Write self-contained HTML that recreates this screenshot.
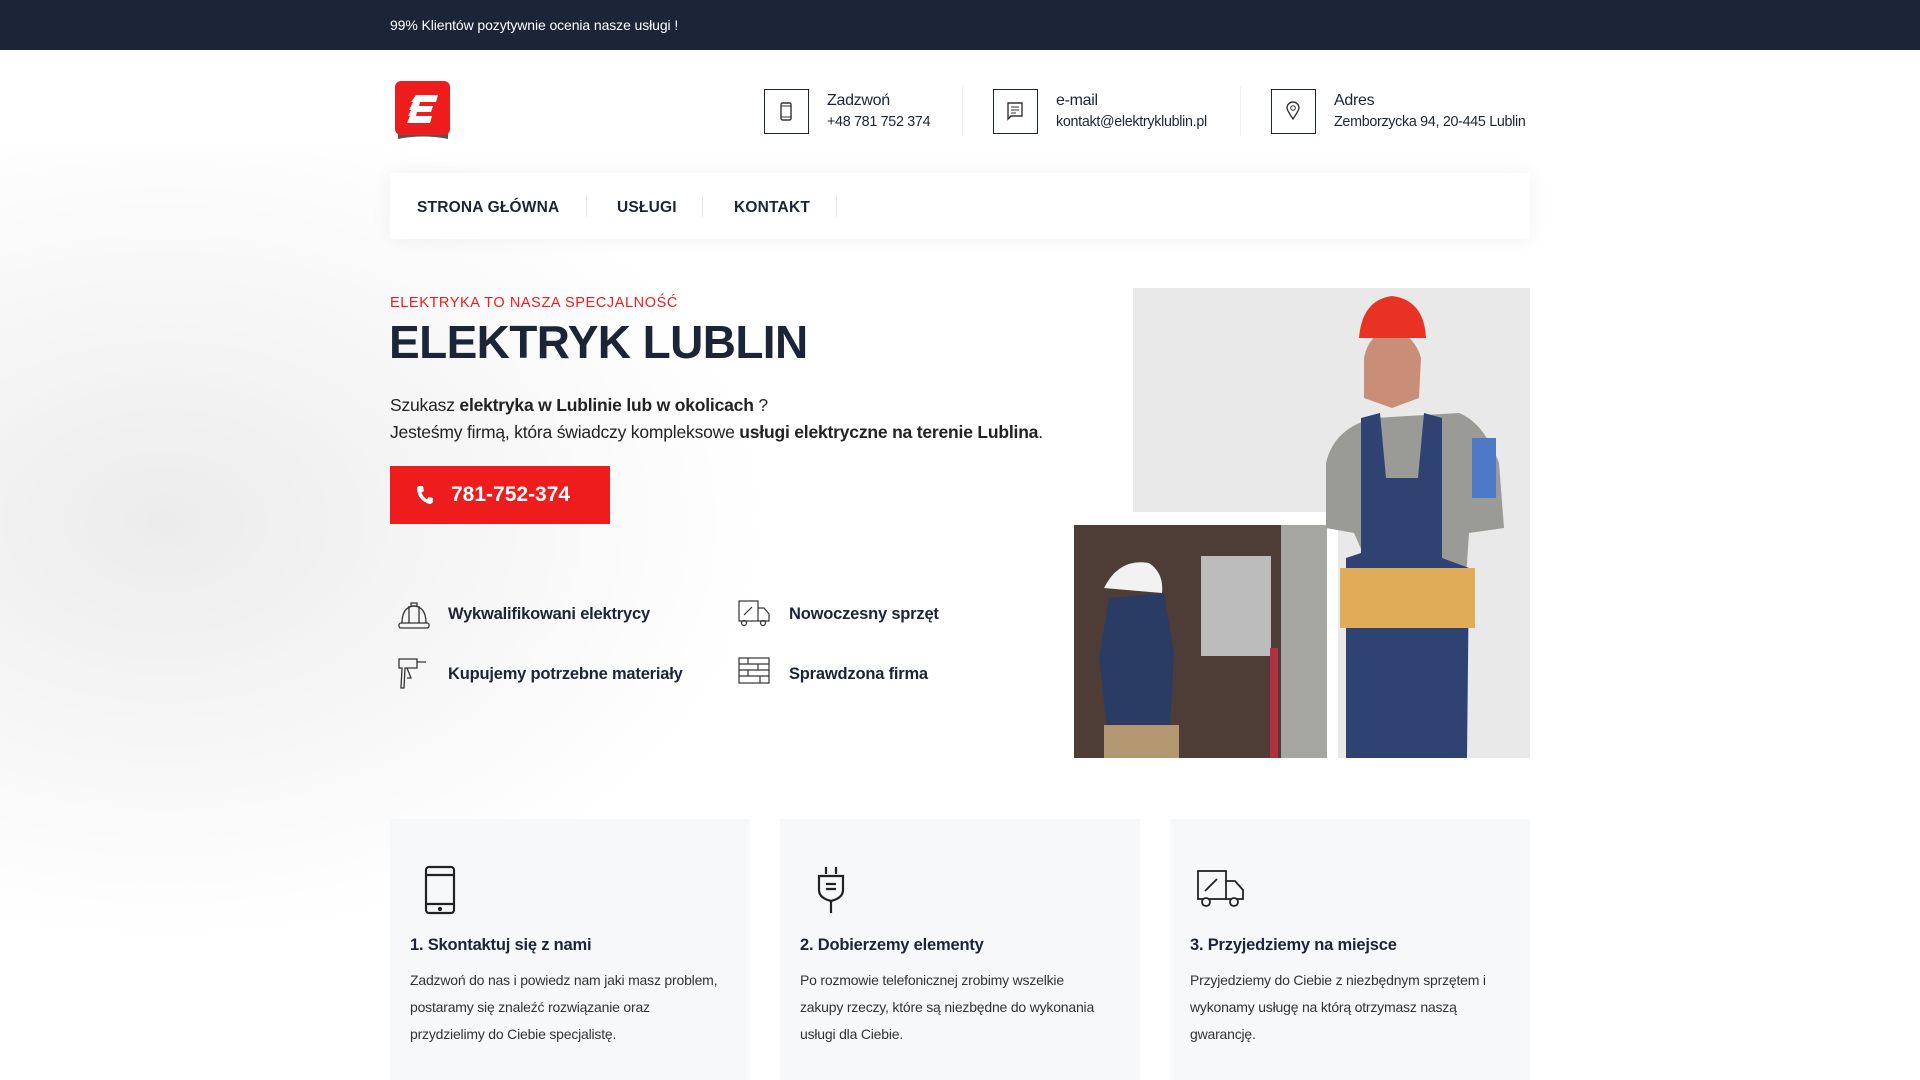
<!DOCTYPE html>
<html><head><meta charset="utf-8"><style>
*{margin:0;padding:0;box-sizing:border-box}
body{width:1920px;height:1080px;overflow:hidden;font-family:"Liberation Sans",sans-serif;color:#1b2537;background:#fff;position:relative}
.top{position:absolute;left:0;top:0;width:1920px;height:50px;background:#1b2537;color:#fff;font-size:14px;line-height:50px;padding-left:390px;letter-spacing:-.1px}
.bg{position:absolute;left:0;top:150px;width:1100px;height:930px;background:radial-gradient(ellipse 55% 45% at 15% 40%,#ececec 0%,#f5f5f5 45%,#fff 100%)}
.abs{position:absolute}
.cbox{position:absolute;width:45px;height:45px;border:1.5px solid #1b2537;top:89px}
.ct{position:absolute;top:92px;font-size:16px;color:#1b2537;letter-spacing:-.3px}
.ct small{display:block;font-size:14.3px;margin-top:4px}
.sep{position:absolute;top:86px;width:1px;height:50px;background:#eee}
.nav{position:absolute;left:390px;top:173px;width:1140px;height:66px;background:#fff;box-shadow:0 0 20px rgba(0,0,0,.06)}
.nav span{position:absolute;top:2px;line-height:66px;font-size:15.5px;font-weight:bold;letter-spacing:.2px}
.nav i{position:absolute;top:22px;width:1px;height:22px;background:#e8e8e8}
.feat{position:absolute;font-size:16.5px;font-weight:bold;letter-spacing:-.2px}
.card{position:absolute;top:819px;width:360px;height:261px;background:#f7f8fa}
.card h3{position:absolute;left:20px;top:117px;font-size:16.5px;letter-spacing:-.2px}
.card p{position:absolute;left:20px;top:148px;width:318px;font-size:14px;line-height:27px;color:#333;letter-spacing:-.2px}
</style></head><body>
<div class="top">99% Klientów pozytywnie ocenia nasze usługi !</div>
<div class="bg"></div>
<svg class="abs" style="left:394px;top:81px" width="58" height="62" viewBox="0 0 58 62"><path d="M4 52 Q29 46 54 52 L54 58 Q29 53 4 58Z" fill="#555"/><rect x="1" y="0" width="55" height="54" rx="6" fill="#ee1c1c"/><path d="M22 14h22l-2 7H26l-1 4h14l-2 6H23l-1 4h16l-2 7H13l3-7h-2l3-6h-2l4-8h-2z" fill="#fff"/></svg>
<div class="cbox" style="left:764px"><svg width="42" height="42" viewBox="0 0 42 42"><rect x="16" y="13" width="10" height="17" rx="1.5" fill="none" stroke="#333" stroke-width="1.4"/><line x1="16" y1="16" x2="26" y2="16" stroke="#333"/><line x1="16" y1="27" x2="26" y2="27" stroke="#333"/></svg></div>
<div class="ct" style="left:827px">Zadzwoń<small>+48 781 752 374</small></div>
<div class="sep" style="left:962px"></div>
<div class="cbox" style="left:993px"><svg width="42" height="42" viewBox="0 0 42 42"><path d="M14 13h14v13H17l-3 3z" fill="none" stroke="#333" stroke-width="1.4"/><path d="M17 17h8M17 20h8M17 23h5" stroke="#333"/></svg></div>
<div class="ct" style="left:1056px">e-mail<small>kontakt@elektryklublin.pl</small></div>
<div class="sep" style="left:1240px"></div>
<div class="cbox" style="left:1271px"><svg width="42" height="42" viewBox="0 0 42 42"><path d="M21 29 Q15 20 15 18 a6 6 0 0 1 12 0 Q27 20 21 29z" fill="none" stroke="#333" stroke-width="1.4"/><circle cx="21" cy="18" r="2.3" fill="none" stroke="#333"/></svg></div>
<div class="ct" style="left:1334px">Adres<small>Zemborzycka 94, 20-445 Lublin</small></div>
<div class="nav"><span style="left:27px">STRONA GŁÓWNA</span><i style="left:196px"></i><span style="left:227px">USŁUGI</span><i style="left:312px"></i><span style="left:344px">KONTAKT</span><i style="left:446px"></i></div>
<div class="abs" style="left:390px;top:295px;font-size:14.5px;color:#ee1c1c;letter-spacing:.6px">ELEKTRYKA TO NASZA SPECJALNOŚĆ</div>
<div class="abs" style="left:389px;top:315px;font-size:46px;font-weight:bold;letter-spacing:-.6px">ELEKTRYK LUBLIN</div>
<div class="abs" style="left:390px;top:392px;font-size:17.5px;line-height:27px;color:#222;letter-spacing:-.2px">Szukasz <b>elektryka w Lublinie lub w okolicach</b> ?<br>Jesteśmy firmą, która świadczy kompleksowe <b>usługi elektryczne na terenie Lublina</b>.</div>
<div class="abs" style="left:390px;top:466px;width:220px;height:58px;background:#ee1c1c;color:#fff;font-size:21px;font-weight:bold;line-height:58px;padding-left:61px">781-752-374</div>
<svg class="abs" style="left:416px;top:485px" width="18" height="20" viewBox="0 0 18 20"><path d="M3 1 L7 1 L8 6 L5.5 7.5 Q7 12 11 14.5 L12.5 12 L17 13 L17 17 Q16 19 13 19 Q2 15 1 4 Q1 1 3 1z" fill="#fff"/></svg>
<svg class="abs" style="left:397px;top:597px" width="34" height="34" viewBox="0 0 34 34" fill="none" stroke="#333" stroke-width="1.3"><path d="M5 26 Q5 10 17 9 Q29 10 29 26"/><rect x="2" y="26" width="30" height="5" rx="2"/><path d="M12 9v17M22 9v17M14 6h6v3h-6z"/></svg>
<div class="feat" style="left:448px;top:605px">Wykwalifikowani elektrycy</div>
<svg class="abs" style="left:738px;top:600px" width="32" height="28" viewBox="0 0 32 28" fill="none" stroke="#333" stroke-width="1.2"><rect x="1" y="1" width="19" height="20"/><path d="M20 8h6l5 6v7H20"/><circle cx="6" cy="23" r="2.5"/><circle cx="25" cy="23" r="2.5"/><path d="M6 15l8-8"/></svg>
<div class="feat" style="left:789px;top:605px">Nowoczesny sprzęt</div>
<svg class="abs" style="left:397px;top:657px" width="32" height="34" viewBox="0 0 32 34" fill="none" stroke="#333" stroke-width="1.3"><path d="M2 2h18v9H8l-1 20H4L5 11H2z"/><path d="M20 5h9M10 11l4 10h-4"/></svg>
<div class="feat" style="left:448px;top:665px">Kupujemy potrzebne materiały</div>
<svg class="abs" style="left:738px;top:657px" width="32" height="28" viewBox="0 0 32 28" fill="none" stroke="#333" stroke-width="1.2"><rect x="1" y="1" width="30" height="25"/><path d="M1 7h30M1 13h30M1 19h30M10 1v6M20 7v6M10 13v6M22 19v7"/></svg>
<div class="feat" style="left:789px;top:665px">Sprawdzona firma</div>
<svg class="abs" style="left:1074px;top:288px" width="456" height="470" viewBox="0 0 456 470">
<rect x="59" y="0" width="397" height="224" fill="#e9e9e9"/>
<rect x="264" y="224" width="192" height="246" fill="#e9e9e9"/>
<rect x="0" y="237" width="253" height="233" fill="#4e3d36"/>
<rect x="207" y="237" width="46" height="233" fill="#a5a5a1"/>
<rect x="127" y="268" width="70" height="100" fill="#bcbcbc"/>
<path d="M30 300 Q45 270 75 275 Q90 285 88 305z" fill="#f2f2f2"/>
<path d="M35 310 L90 305 L100 365 L95 460 L35 460 L25 370z" fill="#2b3c64"/>
<rect x="30" y="437" width="75" height="33" fill="#b39770"/>
<rect x="196" y="360" width="8" height="110" fill="#b23040"/>
<path d="M252 175 Q260 140 300 130 L385 125 Q410 135 425 175 L430 240 L395 245 L392 290 L300 290 L280 245 L252 240z" fill="#9a9a97"/>
<path d="M290 110 L318 120 L345 110 L347 70 Q340 45 316 42 Q295 45 290 70z" fill="#c98e78"/>
<path d="M285 50 Q288 12 318 8 Q350 12 352 50z" fill="#e83224"/>
<path d="M287 130 L306 125 L312 190 L344 190 L350 125 L368 130 L368 270 L395 280 L393 470 L272 470 L272 270 L287 265z" fill="#2f4373"/>
<rect x="266" y="280" width="135" height="60" fill="#e0ac57"/>
<rect x="398" y="150" width="24" height="60" fill="#4d79c6"/>
</svg>
<div class="card" style="left:390px"><svg class="abs" style="left:34px;top:46px" width="34" height="50" viewBox="0 0 34 50" fill="none" stroke="#222" stroke-width="2.2"><rect x="2" y="2" width="28" height="46" rx="3"/><path d="M2 10h28M2 39h28"/><circle cx="16" cy="44" r="1" fill="#222"/></svg><h3>1. Skontaktuj się z nami</h3><p>Zadzwoń do nas i powiedz nam jaki masz problem, postaramy się znaleźć rozwiązanie oraz przydzielimy do Ciebie specjalistę.</p></div>
<div class="card" style="left:780px"><svg class="abs" style="left:34px;top:48px" width="34" height="50" viewBox="0 0 34 50" fill="none" stroke="#222" stroke-width="2.2"><path d="M12 0v7M22 0v7M5 9h24v14Q29 31 17 34Q5 31 5 23z"/><path d="M12 17h10M12 22h10M17 34v12"/></svg><h3>2. Dobierzemy elementy</h3><p style="width:295px">Po rozmowie telefonicznej zrobimy wszelkie zakupy rzeczy, które są niezbędne do wykonania usługi dla Ciebie.</p></div>
<div class="card" style="left:1170px"><svg class="abs" style="left:26px;top:50px" width="50" height="40" viewBox="0 0 50 40" fill="none" stroke="#222" stroke-width="1.8"><rect x="2" y="2" width="28" height="28"/><path d="M30 12h9l8 9v9H30"/><circle cx="10" cy="33" r="4" fill="#f7f8fa"/><circle cx="38" cy="33" r="4" fill="#f7f8fa"/><path d="M9 22l12-12"/></svg><h3>3. Przyjedziemy na miejsce</h3><p>Przyjedziemy do Ciebie z niezbędnym sprzętem i wykonamy usługę na którą otrzymasz naszą gwarancję.</p></div>
</body></html>
